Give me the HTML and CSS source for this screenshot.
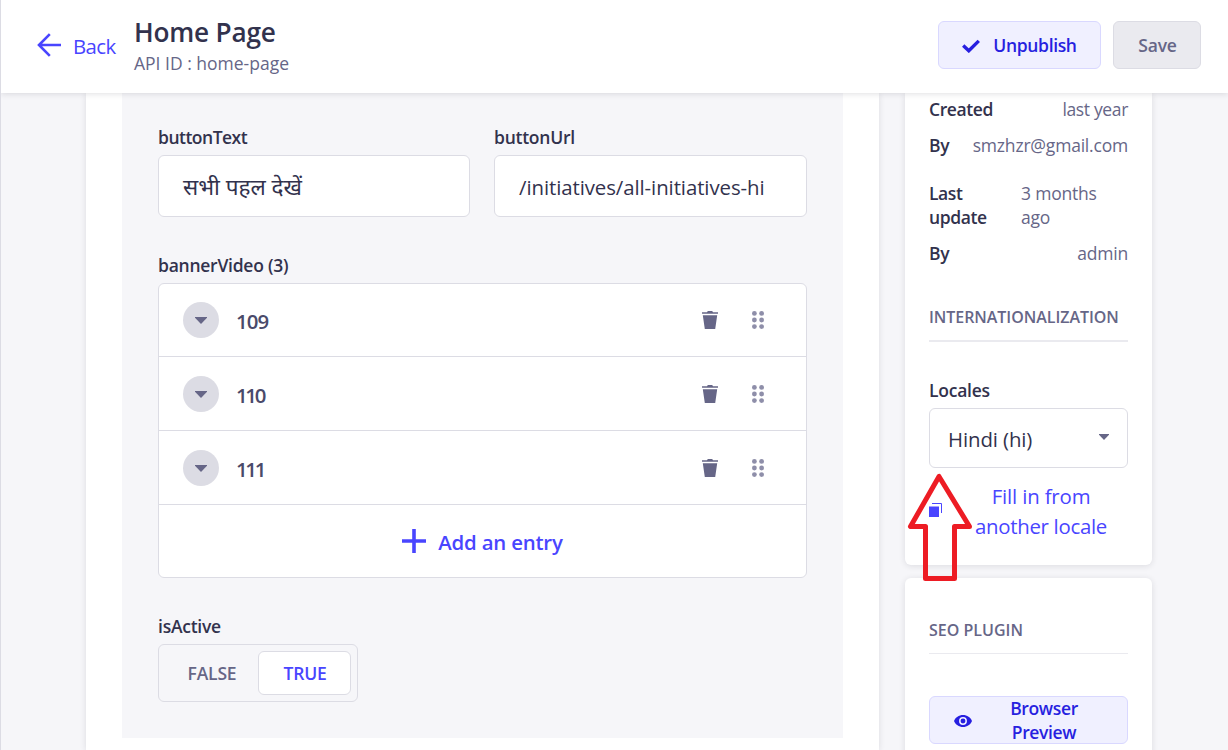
FILE: index.html
```
<!DOCTYPE html>
<html lang="en">
<head>
<meta charset="utf-8">
<title>Home Page</title>
<link rel="stylesheet" href="styles.css">
</head>
<body>
<svg class="defs" aria-hidden="true">
  <symbol id="trash" viewBox="0 0 16 18"><path d="M0 1.2h5l.8-1.200h4.400l.8 1.200h5v1.600H0zM.8 4.300h14.400L13.200 18H2.800z" fill="#666687"/></symbol>
  <symbol id="drag" viewBox="0 0 12 18"><g fill="#8e8ea9"><circle cx="2.4" cy="2.4" r="2.4"/><circle cx="9.6" cy="2.4" r="2.4"/><circle cx="2.4" cy="9" r="2.4"/><circle cx="9.6" cy="9" r="2.4"/><circle cx="2.4" cy="15.6" r="2.4"/><circle cx="9.6" cy="15.6" r="2.4"/></g></symbol>
  <symbol id="caret" viewBox="0 0 12 7"><path d="M0 0h12v.8L6 7 0 .8z" fill="#666687"/></symbol>
</svg>
<div class="app">
  <header class="header">
    <a class="back">
      <svg width="24" height="24" viewBox="0 0 24 24"><path d="M24 12H2.5M12.8 1.2 2 12l10.8 10.8" fill="none" stroke="#4945ff" stroke-width="2.6"/></svg>
      <span>Back</span>
    </a>
    <div class="heading">
      <h1>Home Page</h1>
      <p>API ID : home-page</p>
    </div>
    <div class="actions">
      <button class="btn btn-secondary">
        <svg width="18" height="14" viewBox="0 0 18 14"><path d="M1.2 6.6l5.6 5.2L16.800 1.900" fill="none" stroke="#271fe0" stroke-width="3.4"/></svg>
        <span>Unpublish</span>
      </button>
      <button class="btn btn-disabled">Save</button>
    </div>
  </header>
  <main class="content">
    <section class="card main-card">
      <div class="component">
        <div class="fields">
          <div class="field"><label class="label tight">buttonText</label><div class="input hindi" lang="hi">सभी पहल देखें</div></div>
          <div class="field"><label class="label">buttonUrl</label><div class="input">/initiatives/all-initiatives-hi</div></div>
        </div>
        <div class="field">
          <label class="label">bannerVideo (3)</label>
          <div class="list">
            <div class="row"><span class="toggle-dot"><svg width="12" height="7"><use href="#caret"/></svg></span><span class="row-name">109</span><svg class="trash" width="16" height="18"><use href="#trash"/></svg><svg width="12" height="18"><use href="#drag"/></svg></div>
            <div class="row"><span class="toggle-dot"><svg width="12" height="7"><use href="#caret"/></svg></span><span class="row-name ones">110</span><svg class="trash" width="16" height="18"><use href="#trash"/></svg><svg width="12" height="18"><use href="#drag"/></svg></div>
            <div class="row"><span class="toggle-dot"><svg width="12" height="7"><use href="#caret"/></svg></span><span class="row-name ones">111</span><svg class="trash" width="16" height="18"><use href="#trash"/></svg><svg width="12" height="18"><use href="#drag"/></svg></div>
            <div class="add"><svg width="24" height="24" viewBox="0 0 24 24"><path d="M10.200 0h3.600v10.200H24v3.600H13.800V24h-3.600V13.800H0v-3.600h10.200z" fill="#4945ff"/></svg><span>Add an entry</span></div>
          </div>
        </div>
        <div class="field">
          <label class="label">isActive</label>
          <div class="switch"><span class="off">FALSE</span><span class="on">TRUE</span></div>
        </div>
      </div>
    </section>
    <aside class="side">
      <section class="card info">
        <dl class="meta">
          <div><dt>Created</dt><dd class="year">last year</dd></div>
          <div><dt>By</dt><dd>smzhzr@gmail.com</dd></div>
        </dl>
        <dl class="meta">
          <div><dt class="narrow">Last update</dt><dd class="wrap">3 months ago</dd></div>
          <div><dt>By</dt><dd>admin</dd></div>
        </dl>
        <h2 class="sigma thick">INTERNATIONALIZATION</h2>
        <label class="label locales">Locales</label>
        <div class="select"><span>Hindi (hi)</span><svg width="10" height="6" viewBox="0 0 12 7"><use href="#caret"/></svg></div>
        <div class="fill">
          <svg width="13" height="14" viewBox="0 0 13 14"><path d="M0 3.500h10V14H0z" fill="#4945ff"/><path d="M3 .5h9.500V10" fill="none" stroke="#4945ff"/></svg>
          <span>Fill in from<br><span class="tight-line">another locale</span></span>
        </div>
        <svg class="arrow" width="68" height="114" viewBox="0 0 68 114"><path d="M35 4.500 6.500 54.500H21.500V106.500H50.500V54.500H65.500Z" fill="none" stroke="#ed1c24" stroke-width="5" stroke-linejoin="round"/></svg>
      </section>
      <section class="card seo">
        <h2 class="sigma">SEO PLUGIN</h2>
        <button class="btn btn-secondary preview">
          <svg width="18" height="12" viewBox="0 0 18 12"><path d="M9 0C4.900 0 1.400 2.500 0 6c1.400 3.500 4.900 6 9 6s7.600-2.500 9-6c-1.400-3.500-4.900-6-9-6z" fill="#271fe0"/><circle cx="9" cy="6" r="3.200" fill="#271fe0" stroke="#f0f0ff" stroke-width="1.500"/></svg>
          <span>Browser<br>Preview</span>
        </button>
      </section>
    </aside>
  </main>
</div>
</body>
</html>
```
FILE: styles.css
```
* { box-sizing: border-box; }
body {
  margin: 0;
  height: 750px;
  overflow: hidden;
  background: #f6f6f9;
  color: #32324d;
  font: 400 17.5px/24px "Open Sans", "Noto Sans", sans-serif;
}
h1, h2, p, dl, dd { margin: 0; }
svg { display: block; flex: none; }
.defs { position: absolute; width: 0; height: 0; }
.app { height: 750px; border-left: 1px solid #dcdce4; overflow: hidden; }

.header {
  position: relative;
  z-index: 1;
  display: flex;
  height: 93px;
  padding: 0 27px 0 36px;
  background: #fff;
  box-shadow: 0 1px 6px rgba(33, 33, 52, .14);
}
.back {
  display: flex;
  align-items: center;
  gap: 12px;
  width: 97px;
  height: 90px;
  color: #4945ff;
  font-size: 20.4px;
  white-space: nowrap;
}
.back span { padding-top: 1px; letter-spacing: -.6px; }
.heading { padding-top: 15px; }
h1 { font-size: 26.2px; font-weight: 600; line-height: 34px; letter-spacing: -.2px; }
.heading p { padding-top: 2px; color: #666687; }
.actions { display: flex; gap: 12px; margin: 21px 0 0 auto; }

.btn {
  display: flex;
  align-items: center;
  justify-content: center;
  height: 48px;
  padding: 0;
  border: 1px solid #d9d8ff;
  border-radius: 6px;
  font: 600 17.5px/24px "Open Sans", "Noto Sans", sans-serif;
}
.btn-secondary { width: 163px; gap: 13px; background: #f0f0ff; color: #271fe0; letter-spacing: -.35px; }
.btn-secondary svg { margin-top: 1px; }
.btn-disabled { width: 88px; padding-left: 1px; border-color: #dcdce4; background: #eaeaef; color: #666687; letter-spacing: -.2px; }

.content { display: flex; gap: 26px; height: 657px; padding-left: 85px; }
.card { background: #fff; box-shadow: 0 1px 6px rgba(33, 33, 52, .12); }
.main-card { width: 793px; padding: 0 36px; }
.component { display: grid; align-content: start; gap: 36px; height: 645px; padding: 32px 36px 0; background: #f6f6f9; }
.fields { display: grid; grid-template-columns: 312px 313px; gap: 24px; }
.label { display: block; margin-bottom: 6px; font-weight: 600; letter-spacing: -.25px; }
.label.tight { letter-spacing: -.5px; }
.input {
  display: flex;
  align-items: center;
  height: 62px;
  padding: 2px 24px 0;
  border: 1px solid #dcdce4;
  border-radius: 6px;
  background: #fff;
  font-size: 20.4px;
  letter-spacing: -.08px;
  white-space: nowrap;
}
.input.hindi { font-size: 22.5px; padding-top: 1px; letter-spacing: 0; }

.list { height: 295px; border: 1px solid #dcdce4; border-radius: 6px; background: #fff; }
.row { display: flex; align-items: center; height: 74px; padding: 0 42px 0 24px; border-bottom: 1px solid #dcdce4; }
.row + .row { padding-top: 1px; }
.row:first-child { height: 73px; }
.toggle-dot { display: grid; place-items: center; width: 36px; height: 36px; border-radius: 50%; background: #dcdce4; }
.row-name { flex: 1; padding: 1px 0 0 17px; color: #4a4a6a; font-size: 20.4px; font-weight: 600; letter-spacing: -.9px; }
.row-name.ones { letter-spacing: -2.3px; }
.trash { margin-right: 34px; }
.add {
  display: flex;
  align-items: center;
  justify-content: center;
  gap: 12px;
  height: 72px;
  color: #4945ff;
  font-size: 20.4px;
  font-weight: 600;
  letter-spacing: -.2px;
}
.add span { padding-top: 1px; }

.switch {
  display: flex;
  width: 200px;
  height: 58px;
  padding: 6px;
  border: 1px solid #dcdce4;
  border-radius: 6px;
  font-weight: 600;
  line-height: 44px;
  text-align: center;
}
.off { width: 93px; padding-left: 1px; color: #666687; letter-spacing: -.2px; }
.on { width: 93px; padding-left: 1px; border: 1px solid #dcdce4; border-radius: 6px; background: #fff; color: #4945ff; line-height: 42px; letter-spacing: -.2px; }

.side { display: grid; grid-template-columns: 247px; align-content: start; gap: 13px; width: 247px; }
.info { position: relative; height: 472px; padding: 4px 24px 0; border-radius: 0 0 6px 6px; }
.meta { display: grid; gap: 12px; margin-bottom: 24px; }
.meta div { display: flex; justify-content: space-between; }
dt { font-weight: 600; letter-spacing: -.4px; }
dt.narrow { width: 62px; }
dd { color: #666687; letter-spacing: -.2px; }
dd.year { letter-spacing: -.35px; }
dd.wrap { width: 107px; padding-right: 24px; }
.sigma { color: #666687; font-size: 16px; line-height: 24px; font-weight: 600; border-bottom: 1px solid #eaeaef; padding-bottom: 11px; }
.thick { margin-top: 40px; border-bottom-width: 2px; white-space: nowrap; letter-spacing: -.05px; }
.locales { margin-top: 36px; }
.select {
  display: flex;
  align-items: center;
  justify-content: space-between;
  height: 60px;
  padding: 0 18px;
  border: 1px solid #dcdce4;
  border-radius: 6px;
  font-size: 20.4px;
}
.select span { padding-top: 1px; letter-spacing: -.1px; }
.select svg { margin-bottom: 2px; }
.fill { display: flex; align-items: center; margin-top: 13px; color: #4945ff; font-size: 20.4px; line-height: 30px; }
.fill > svg { margin-bottom: 3px; }
.fill > span { flex: 1; padding-left: 12px; text-align: center; letter-spacing: -.15px; }
.tight-line { letter-spacing: -.3px; }
.arrow { position: absolute; left: -1px; top: 379px; }
.seo { height: 220px; padding: 40px 24px 0; border-radius: 6px; }
.preview { width: 199px; margin-top: 42px; justify-content: flex-start; padding: 0 24px; gap: 0; }
.preview svg { margin-top: 2px; }
.preview span { flex: 1; padding-left: 13px; }
```
